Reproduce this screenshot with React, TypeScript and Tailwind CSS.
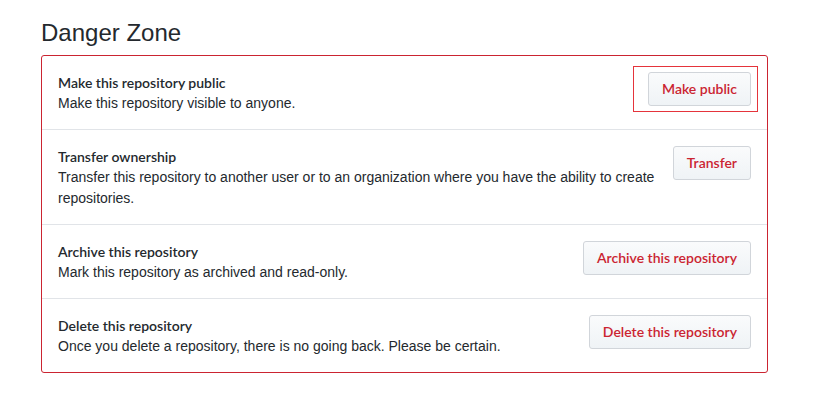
import React from 'react';

type DangerItem = {
  id: string;
  title: string;
  description: string;
  action: string;
  highlighted?: boolean;
};

const items: DangerItem[] = [
  {
    id: 'public',
    title: 'Make this repository public',
    description: 'Make this repository visible to anyone.',
    action: 'Make public',
    highlighted: true,
  },
  {
    id: 'transfer',
    title: 'Transfer ownership',
    description:
      'Transfer this repository to another user or to an organization where you have the ability to create repositories.',
    action: 'Transfer',
  },
  {
    id: 'archive',
    title: 'Archive this repository',
    description: 'Mark this repository as archived and read-only.',
    action: 'Archive this repository',
  },
  {
    id: 'delete',
    title: 'Delete this repository',
    description: 'Once you delete a repository, there is no going back. Please be certain.',
    action: 'Delete this repository',
  },
];

const boldFont = { fontFamily: '"Segoe UI", Lato, "Liberation Sans", sans-serif' };

const DangerButton: React.FC<{ label: string; highlighted?: boolean }> = ({ label, highlighted }) => (
  <div className="relative shrink-0">
    {/* annotation box drawn around the button */}
    {highlighted && (
      <div className="absolute -left-[15px] -right-[7px] -top-[6px] -bottom-[6px] border border-[#e5343b] pointer-events-none" />
    )}
    <button
      className="h-[34px] px-[13px] rounded-[3px] border border-[#d1d5da] bg-gradient-to-b from-[#fafbfc] to-[#eff3f6] text-[14px] font-semibold leading-5 text-[#cb2431] whitespace-nowrap"
      style={boldFont}
    >
      {label}
    </button>
  </div>
);

export default function App() {
  return (
    <div
      className="min-h-screen bg-white text-[#24292e] pl-[41px] pt-[15px]"
      style={{ fontFamily: '"Segoe UI", "Liberation Sans", Arial, sans-serif' }}
    >
      <h2 className="text-[24px] font-normal leading-[36px] mb-[4px]">Danger Zone</h2>
      <div className="w-[727px] border border-[#cb2431] rounded-[3px]">
        {items.map((item, i) => (
          <div
            key={item.id}
            className={`flex items-start gap-3 px-4 pt-4 pb-[15px] ${i > 0 ? 'border-t border-[#e1e4e8]' : ''}`}
          >
            <div className="flex-1 text-[14px] leading-[21px]">
              <div className="font-semibold" style={boldFont}>
                {item.title}
              </div>
              <div>{item.description}</div>
            </div>
            <DangerButton label={item.action} highlighted={item.highlighted} />
          </div>
        ))}
      </div>
    </div>
  );
}
